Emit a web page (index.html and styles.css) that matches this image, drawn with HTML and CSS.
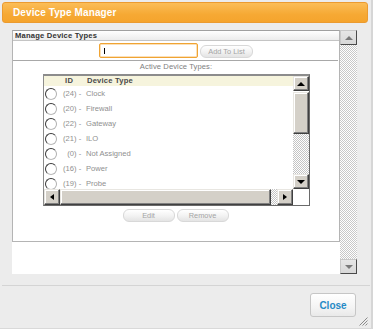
FILE: index.html
```html
<!DOCTYPE html>
<html>
<head>
<meta charset="utf-8">
<title>Device Type Manager</title>
<link rel="stylesheet" href="styles.css">
</head>
<body>
<div class="dialog">
  <div class="titlebar">Device Type Manager</div>
  <div class="main">
    <div class="frame">
      <div class="panel">
        <div class="panel-head">Manage Device Types</div>
        <div class="add-row">
          <div class="input"><span class="caret"></span></div>
          <button class="pill add">Add To List</button>
        </div>
        <div class="rule"></div>
        <div class="caption">Active Device Types:</div>
        <div class="listbox">
          <div class="list-view">
            <div class="list-head"><span class="h-id">ID</span><span class="h-name">Device Type</span></div>
            <div class="row"><span class="radio"></span><span class="rid">(24)</span><span class="dash">-</span><span class="rname">Clock</span></div>
            <div class="row"><span class="radio"></span><span class="rid">(20)</span><span class="dash">-</span><span class="rname">Firewall</span></div>
            <div class="row"><span class="radio"></span><span class="rid">(22)</span><span class="dash">-</span><span class="rname">Gateway</span></div>
            <div class="row"><span class="radio"></span><span class="rid">(21)</span><span class="dash">-</span><span class="rname">ILO</span></div>
            <div class="row"><span class="radio"></span><span class="rid">(0)</span><span class="dash">-</span><span class="rname">Not Assigned</span></div>
            <div class="row"><span class="radio"></span><span class="rid">(16)</span><span class="dash">-</span><span class="rname">Power</span></div>
            <div class="row"><span class="radio"></span><span class="rid">(19)</span><span class="dash">-</span><span class="rname">Probe</span></div>
          </div>
          <div class="vbar">
            <div class="sbtn"><span class="arr up"></span></div>
            <div class="vthumb"></div>
            <div class="track"></div>
            <div class="sbtn"><span class="arr down"></span></div>
          </div>
          <div class="hbar">
            <div class="sbtn"><span class="arr left"></span></div>
            <div class="hthumb"></div>
            <div class="track"></div>
            <div class="sbtn"><span class="arr right"></span></div>
          </div>
          <div class="corner"></div>
        </div>
        <div class="btn-row">
          <button class="pill act">Edit</button>
          <button class="pill act">Remove</button>
        </div>
      </div>
    </div>
    <div class="page-scroll">
      <div class="pbtn"><span class="parr up"></span></div>
      <div class="ptrack"></div>
      <div class="pbtn"><span class="parr down"></span></div>
    </div>
  </div>
  <div class="footer">
    <button class="close">Close</button>
  </div>
  <svg class="grip" width="9" height="9" viewBox="0 0 9 9">
    <path d="M8.5 0.5 L0.5 8.5 M8.5 3.5 L3.5 8.5 M8.5 6.5 L6.5 8.5" stroke="#8a8a8a" stroke-width="1" fill="none"/>
  </svg>
</div>
</body>
</html>
```
FILE: styles.css
```css
* { box-sizing: border-box; }
html, body { margin: 0; padding: 0; }
body {
  width: 373px;
  height: 329px;
  overflow: hidden;
  background: #ececec;
  font-family: "Liberation Sans", Arial, sans-serif;
}
.dialog {
  position: relative;
  height: 329px;
  padding-top: 2px;
  border-right: 2px solid #d6d6d6;
  border-bottom: 1px solid #d9d9d9;
}
.titlebar {
  margin: 0 3px 0 2px;
  height: 21px;
  border: 1px solid #eb9b30;
  border-radius: 3px;
  background: linear-gradient(#fbbd57, #f6a934 60%, #f5a42d);
  color: #fff;
  font-weight: bold;
  font-size: 10px;
  letter-spacing: 0.1px;
  line-height: 20px;
  padding-left: 10px;
}
.main {
  display: flex;
  margin-top: 7px;
  padding-left: 12px;
}
.frame {
  width: 328px;
  height: 244px;
  background: #fff;
}
.panel {
  height: 212px;
  border: 1px solid #b4b4b4;
  border-top-color: #a0a0a0;
}
.panel-head {
  height: 10px;
  border-bottom: 1px solid #c4c4c4;
  background: linear-gradient(#ffffff, #ececec);
  font-size: 7.6px;
  font-weight: bold;
  color: #333;
  line-height: 9px;
  padding-left: 2px;
  letter-spacing: 0.2px;
}
.add-row {
  display: flex;
  align-items: center;
  margin-top: 2px;
  padding-left: 86px;
  gap: 2px;
  height: 15px;
}
.input {
  width: 99px;
  height: 15px;
  border: 1px solid #f0a433;
  border-radius: 2px;
  box-shadow: inset 0 0 0 0.5px #f7c275;
  background: #fff;
  position: relative;
}
.caret {
  position: absolute;
  left: 4px;
  top: 4px;
  width: 1px;
  height: 6px;
  background: #000;
}
.pill {
  font-family: "Liberation Sans", Arial, sans-serif;
  padding: 0;
  margin: 0;
  border: 1px solid #d8d8d8;
  border-radius: 6px;
  background: linear-gradient(#ffffff, #f3f3f3 50%, #e4e4e4);
  color: #a4a4a4;
  font-size: 7.4px;
  line-height: 11px;
  height: 13px;
}
.pill.add {
  width: 53px;
  margin-top: 2px;
}
.rule {
  margin-top: 2px;
  height: 1px;
  background: #a8a8a8;
  margin-right: 1px;
}
.caption {
  margin-top: 1px;
  height: 10px;
  line-height: 10px;
  text-align: center;
  font-size: 7.6px;
  color: #808080;
  letter-spacing: 0.1px;
}
.listbox {
  margin: 2px 0 0 30px;
  width: 267px;
  height: 132px;
  border-top: 2px solid #8c8c8c;
  border-left: 1px solid #8c8c8c;
  border-right: 1px solid #6a6a6a;
  border-bottom: 1px solid #6a6a6a;
  display: grid;
  grid-template-columns: 249px 16px;
  grid-template-rows: 113px 16px;
  background: #fff;
}
.list-view {
  overflow: hidden;
}
.list-head {
  height: 10px;
  background: #f6f4dd;
  font-size: 7.6px;
  font-weight: bold;
  color: #4a4a4a;
  line-height: 10px;
  display: flex;
}
.h-id {
  width: 42px;
  padding-left: 21px;
  letter-spacing: 0.3px;
}
.h-name {
  margin-left: 1px;
  letter-spacing: 0.2px;
}
.row {
  height: 15px;
  display: flex;
  align-items: center;
  font-size: 7.6px;
  color: #8f8f8f;
}
.radio {
  width: 12px;
  height: 12px;
  margin-left: 1px;
  border-radius: 50%;
  border: 1.5px solid;
  border-color: #3a3a3a #b0b0b0 #b8b8b8 #3a3a3a;
  background: #fff;
  flex: none;
}
.rid {
  width: 19.5px;
  text-align: right;
  flex: none;
}
.dash {
  width: 7px;
  text-align: center;
  flex: none;
}
.rname {
  margin-left: 2.5px;
}
.vbar {
  display: flex;
  flex-direction: column;
}
.hbar {
  display: flex;
}
.sbtn {
  width: 16px;
  height: 16px;
  flex: none;
  background: #d4d0c8;
  border: 1px solid;
  border-color: #e8e6e1 #404040 #404040 #e8e6e1;
  box-shadow: inset -1px -1px 0 #808080, inset 1px 1px 0 #ffffff;
  display: flex;
  align-items: center;
  justify-content: center;
}
.vbar .sbtn { height: 15px; }
.arr {
  width: 0;
  height: 0;
  border: 4px solid transparent;
}
.arr.up { border-bottom-color: #000; border-top-width: 0; }
.arr.down { border-top-color: #000; border-bottom-width: 0; }
.arr.left { border-right-color: #000; border-left-width: 0; border-top-width: 3.5px; border-bottom-width: 3.5px; }
.arr.right { border-left-color: #000; border-right-width: 0; border-top-width: 3.5px; border-bottom-width: 3.5px; }
.vthumb {
  margin-top: 1px;
  height: 42px;
  background: #d4d0c8;
  border: 1px solid;
  border-color: #e8e6e1 #404040 #404040 #e8e6e1;
  box-shadow: inset -1px -1px 0 #808080, inset 1px 1px 0 #ffffff;
}
.hthumb {
  width: 211px;
  background: #d4d0c8;
  border: 1px solid;
  border-color: #e8e6e1 #404040 #404040 #e8e6e1;
  box-shadow: inset -1px -1px 0 #808080, inset 1px 1px 0 #ffffff;
}
.track {
  flex: 1;
  background-image: repeating-conic-gradient(#c4c4c4 0 25%, #ffffff 0 50%);
  background-size: 2px 2px;
}
.corner { background: #fff; }
.btn-row {
  display: flex;
  justify-content: center;
  gap: 2px;
  margin-top: 3px;
  padding-right: 1px;
}
.pill.act {
  width: 52px;
}
.page-scroll {
  width: 17px;
  height: 244px;
  display: flex;
  flex-direction: column;
}
.pbtn {
  height: 15px;
  flex: none;
  background: linear-gradient(#e6e6e6, #d8d8d8);
  border: 1px solid;
  border-color: #c8c8c8 #4a4a4a #4a4a4a #c8c8c8;
  display: flex;
  align-items: center;
  justify-content: center;
}
.parr {
  width: 0;
  height: 0;
  border-left: 4px solid transparent;
  border-right: 4px solid transparent;
}
.parr.up { border-bottom: 4px solid #7a7a7a; }
.parr.down { border-top: 4px solid #7a7a7a; }
.ptrack {
  flex: 1;
  background-image: repeating-conic-gradient(#c8c8c8 0 25%, #ffffff 0 50%);
  background-size: 2px 2px;
}
.footer {
  margin: 11px 1px 0 2px;
  border-top: 1px solid #d4d4d4;
  display: flex;
  justify-content: flex-end;
  padding: 7px 14px 0 0;
}
.close {
  width: 46px;
  height: 24px;
  border: 1px solid #c6c6c6;
  border-radius: 3px;
  background: linear-gradient(#ffffff, #f4f4f4 60%, #e9e9e9);
  color: #268ac6;
  font-family: "Liberation Sans", Arial, sans-serif;
  font-weight: bold;
  font-size: 10px;
  padding: 0;
}
.grip {
  position: absolute;
  right: 3px;
  bottom: 2px;
}
```
